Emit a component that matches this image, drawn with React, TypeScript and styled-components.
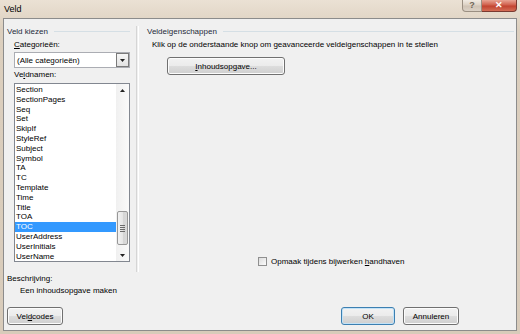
import React from "react";
import styled, { createGlobalStyle } from "styled-components";

const GlobalStyle = createGlobalStyle`
  html, body {
    margin: 0;
    padding: 0;
    background: #e2d6c6;
  }
  body {
    font-family: "Liberation Sans", Arial, sans-serif;
    font-size: 8px;
    color: #000;
  }
`;

const FIELDS = [
  "Section",
  "SectionPages",
  "Seq",
  "Set",
  "SkipIf",
  "StyleRef",
  "Subject",
  "Symbol",
  "TA",
  "TC",
  "Template",
  "Time",
  "Title",
  "TOA",
  "TOC",
  "UserAddress",
  "UserInitials",
  "UserName",
];

const Window = styled.div`
  width: 520px;
  height: 334px;
  display: flex;
  flex-direction: column;
  background: linear-gradient(#ebe1d4, #dccfbe 30px, #d8cbba);
  box-sizing: border-box;
`;

const TitleBar = styled.div`
  height: 18px;
  display: flex;
  align-items: flex-start;
  padding: 0 3px 0 4px;
  flex-shrink: 0;
`;

const Title = styled.span`
  font-size: 9px;
  line-height: 18px;
  color: #000;
`;

const Controls = styled.div`
  margin-left: auto;
  display: flex;
`;

const CaptionButton = styled.div<{ $close?: boolean }>`
  width: ${(p) => (p.$close ? 35 : 20)}px;
  height: 12px;
  box-sizing: border-box;
  display: flex;
  align-items: center;
  justify-content: center;
  border: 1px solid ${(p) => (p.$close ? "#7a3a30" : "#9a8f82")};
  border-top: none;
  border-left: ${(p) => (p.$close ? "none" : undefined)};
  border-radius: ${(p) => (p.$close ? "0 0 4px 0" : "0 0 0 4px")};
  background: ${(p) =>
    p.$close
      ? "linear-gradient(#e8a493, #d0604c 45%, #c24430 55%, #d46d55)"
      : "linear-gradient(#f1ebe3, #ddd2c5 45%, #cfc3b5 55%, #dcd2c6)"};
  color: ${(p) => (p.$close ? "#fff" : "#6f6558")};
  font-size: 9px;
  font-weight: bold;
  line-height: 1;
`;

const Client = styled.div`
  flex: 1;
  margin: 0 3px 3px 3px;
  border: 1px solid #8c8c8c;
  background: #f0f0f0;
  display: flex;
  flex-direction: column;
  min-height: 0;
`;

const Main = styled.div`
  display: flex;
  height: 253px;
  padding-top: 7px;
  box-sizing: border-box;
`;

const LeftPane = styled.div`
  width: 132px;
  display: flex;
  flex-direction: column;
`;

const Divider = styled.div`
  width: 1px;
  border-left: 1px solid #d5d5d5;
  border-right: 1px solid #fff;
`;

const RightPane = styled.div`
  flex: 1;
  display: flex;
  flex-direction: column;
  padding-left: 8px;
  padding-bottom: 6px;
`;

const GroupHeader = styled.div<{ $indent: number; $end: number }>`
  display: flex;
  align-items: center;
  height: 10px;
  padding-left: ${(p) => p.$indent}px;
  padding-right: ${(p) => p.$end}px;
  color: #1e2a3a;
  white-space: nowrap;
  &::after {
    content: "";
    flex: 1;
    height: 1px;
    margin-left: 6px;
    background: #d5dfe5;
  }
`;

const Label = styled.div<{ $top: number }>`
  margin: ${(p) => p.$top}px 0 0 10px;
  height: 10px;
  line-height: 10px;
  white-space: nowrap;
`;

const Key = styled.span`
  text-decoration: underline;
`;

const Select = styled.div`
  margin: 2px 0 0 10px;
  width: 116px;
  height: 16px;
  box-sizing: border-box;
  border: 1px solid #abadb3;
  background: #fff;
  display: flex;
  align-items: center;
  padding-left: 2px;
`;

const SelectText = styled.span`
  flex: 1;
`;

const DropButton = styled.div`
  width: 13px;
  height: 14px;
  box-sizing: border-box;
  border: 1px solid #7a7a7a;
  background: linear-gradient(#f6f6f6, #e2e2e2);
  display: flex;
  align-items: center;
  justify-content: center;
`;

const ListBox = styled.div`
  margin: 3px 0 0 10px;
  width: 116px;
  height: 179px;
  box-sizing: border-box;
  border: 1px solid #828790;
  background: #fff;
  display: flex;
`;

const Items = styled.div`
  flex: 1;
  padding-top: 1px;
`;

const Item = styled.div<{ $selected?: boolean }>`
  height: 9.8px;
  line-height: 9.8px;
  padding-left: 1px;
  background: ${(p) => (p.$selected ? "#3399ff" : "transparent")};
  color: ${(p) => (p.$selected ? "#fff" : "#000")};
  white-space: nowrap;
`;

const ScrollBar = styled.div`
  width: 13px;
  display: flex;
  flex-direction: column;
  align-items: center;
  background: linear-gradient(90deg, #f0f0f0, #fafafa);
`;

const Arrow = styled.div`
  height: 12px;
  width: 13px;
  display: flex;
  align-items: center;
  justify-content: center;
`;

const Thumb = styled.div`
  margin-top: auto;
  margin-bottom: 4px;
  width: 11px;
  height: 34px;
  box-sizing: border-box;
  border: 1px solid #979797;
  border-radius: 2px;
  background: linear-gradient(90deg, #f2f2f2, #e6e6e6 50%, #d4d4d4 50%, #dadada);
  display: flex;
  flex-direction: column;
  align-items: center;
  justify-content: center;
  gap: 1px;
`;

const Grip = styled.div`
  width: 5px;
  height: 1px;
  background: #6b6b6b;
`;

const InfoText = styled.div`
  margin: 4px 0 0 5px;
  height: 10px;
  line-height: 10px;
  white-space: nowrap;
`;

const Button = styled.div<{ $width: number; $default?: boolean }>`
  width: ${(p) => p.$width}px;
  height: 18px;
  box-sizing: border-box;
  border: 1px solid ${(p) => (p.$default ? "#3c7fb1" : "#707070")};
  border-radius: 3px;
  background: linear-gradient(#f2f2f2, #ebebeb 50%, #dddddd 50%, #cfcfcf);
  box-shadow: inset 0 0 0 1px ${(p) => (p.$default ? "#c2e2f7" : "#fcfcfc")};
  display: flex;
  align-items: center;
  justify-content: center;
  white-space: nowrap;
`;

const PropsButton = styled(Button)`
  margin: 7px 0 0 20px;
`;

const CheckRow = styled.label`
  margin-top: auto;
  padding-left: 111px;
  display: flex;
  align-items: center;
  gap: 4px;
  height: 10px;
  white-space: nowrap;
`;

const CheckBox = styled.span`
  width: 9px;
  height: 9px;
  box-sizing: border-box;
  border: 1px solid #8f8f8f;
  background: linear-gradient(135deg, #dcdcdc, #fbfbfb);
`;

const Bottom = styled.div`
  display: flex;
  flex-direction: column;
  padding: 2px 0 0 3px;
`;

const Heading = styled.div`
  height: 10px;
  line-height: 10px;
`;

const Description = styled.div`
  margin: 2px 0 0 13px;
  height: 10px;
  line-height: 10px;
`;

const ButtonRow = styled.div`
  margin-top: 11px;
  display: flex;
  gap: 8px;
  padding-right: 57px;
`;

const Spacer = styled.div`
  flex: 1;
`;

const Triangle = ({ up }: { up?: boolean }) => (
  <svg width="5" height="3" viewBox="0 0 5 3">
    <path d={up ? "M0 3L2.5 0L5 3Z" : "M0 0L5 0L2.5 3Z"} fill="#222" />
  </svg>
);

export default function App() {
  return (
    <>
      <GlobalStyle />
      <Window>
        <TitleBar>
          <Title>Veld</Title>
          <Controls>
            <CaptionButton>?</CaptionButton>
            <CaptionButton $close>✕</CaptionButton>
          </Controls>
        </TitleBar>
        <Client>
          <Main>
            <LeftPane>
              <GroupHeader $indent={3} $end={6}>Veld kiezen</GroupHeader>
              <Label $top={4}>
                <Key>C</Key>ategorieën:
              </Label>
              <Select>
                <SelectText>(Alle categorieën)</SelectText>
                <DropButton>
                  <Triangle />
                </DropButton>
              </Select>
              <Label $top={2}>
                Ve<Key>l</Key>dnamen:
              </Label>
              <ListBox>
                <Items>
                  {FIELDS.map((f) => (
                    <Item key={f} $selected={f === "TOC"}>
                      {f}
                    </Item>
                  ))}
                </Items>
                <ScrollBar>
                  <Arrow>
                    <Triangle up />
                  </Arrow>
                  <Thumb>
                    <Grip />
                    <Grip />
                    <Grip />
                    <Grip />
                  </Thumb>
                  <Arrow>
                    <Triangle />
                  </Arrow>
                </ScrollBar>
              </ListBox>
            </LeftPane>
            <Divider />
            <RightPane>
              <GroupHeader $indent={0} $end={2}>Veldeigenschappen</GroupHeader>
              <InfoText>
                Klik op de onderstaande knop om geavanceerde veldeigenschappen in te stellen
              </InfoText>
              <PropsButton $width={118}>
                <Key>I</Key>nhoudsopgave...
              </PropsButton>
              <CheckRow>
                <CheckBox />
                <span>
                  Opmaak tijdens bijwerken <Key>h</Key>andhaven
                </span>
              </CheckRow>
            </RightPane>
          </Main>
          <Bottom>
            <Heading>Beschrijving:</Heading>
            <Description>Een inhoudsopgave maken</Description>
            <ButtonRow>
              <Button $width={56}>
                Vel<Key>d</Key>codes
              </Button>
              <Spacer />
              <Button $width={54} $default>
                OK
              </Button>
              <Button $width={56}>Annuleren</Button>
            </ButtonRow>
          </Bottom>
        </Client>
      </Window>
    </>
  );
}
